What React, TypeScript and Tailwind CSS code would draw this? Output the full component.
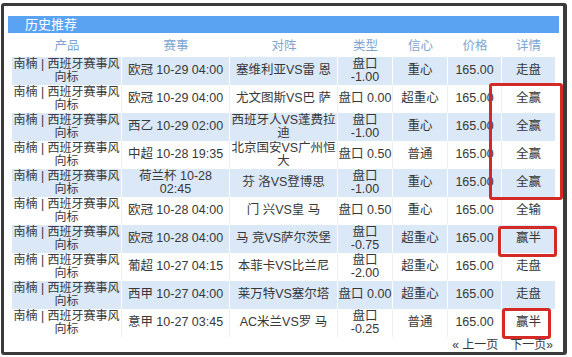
import React from "react";

type Row = {
  match: string[];
  vs: string[];
  type: string[];
  conf: string;
  result: string;
};

const rows: Row[] = [
  { match: ["欧冠 10-29 04:00"], vs: ["塞维利亚VS雷 恩"], type: ["盘口", "-1.00"], conf: "重心", result: "走盘" },
  { match: ["欧冠 10-29 04:00"], vs: ["尤文图斯VS巴 萨"], type: ["盘口 0.00"], conf: "超重心", result: "全赢" },
  { match: ["西乙 10-29 02:00"], vs: ["西班牙人VS蓬费拉", "迪"], type: ["盘口", "-1.00"], conf: "重心", result: "全赢" },
  { match: ["中超 10-28 19:35"], vs: ["北京国安VS广州恒", "大"], type: ["盘口 0.50"], conf: "普通", result: "全赢" },
  { match: ["荷兰杯 10-28", "02:45"], vs: ["芬 洛VS登博思"], type: ["盘口", "-1.00"], conf: "重心", result: "全赢" },
  { match: ["欧冠 10-28 04:00"], vs: ["门 兴VS皇 马"], type: ["盘口 0.50"], conf: "重心", result: "全输" },
  { match: ["欧冠 10-28 04:00"], vs: ["马 竞VS萨尔茨堡"], type: ["盘口", "-0.75"], conf: "超重心", result: "赢半" },
  { match: ["葡超 10-27 04:15"], vs: ["本菲卡VS比兰尼"], type: ["盘口", "-2.00"], conf: "超重心", result: "走盘" },
  { match: ["西甲 10-27 04:00"], vs: ["莱万特VS塞尔塔"], type: ["盘口 0.00"], conf: "超重心", result: "走盘" },
  { match: ["意甲 10-27 03:45"], vs: ["AC米兰VS罗 马"], type: ["盘口", "-0.25"], conf: "普通", result: "赢半" },
];

const widths = ["w-[110px]", "w-[108px]", "w-[108px]", "w-[55px]", "w-[55px]", "w-[54px]", "w-[53px]"];
const headers = ["产品", "赛事", "对阵", "类型", "信心", "价格", "详情"];

function Lines({ lines }: { lines: string[] }) {
  return (
    <span>
      {lines.map((l, i) => (
        <React.Fragment key={i}>
          {i > 0 && <br />}
          {l}
        </React.Fragment>
      ))}
    </span>
  );
}

export default function App() {
  return (
    <div className="relative w-[572px] h-[357px] bg-white pt-[3px] pl-[1px] font-['Liberation_Sans','Noto_Sans_CJK_SC',sans-serif] text-[#383838]">
      <div className="w-[566px] h-[352px] border-[3px] border-r-[4px] border-[#3b3b3b] rounded-[3px] bg-white">
        {/* title bar */}
        <div className="mt-[10px] ml-[4px] w-[551px] h-[17px] bg-[#5aa3f3] pl-[17px] flex items-center text-[13px] text-white leading-none">
          历史推荐
        </div>

        {/* column headers */}
        <div className="ml-[8px] w-[543px] h-[24px] flex pt-[3px] text-[12.5px] text-[#7ea5cf]">
          {headers.map((h, i) => (
            <div key={h} className={`${widths[i]} flex items-center justify-center`}>
              {h}
            </div>
          ))}
        </div>

        {/* rows */}
        <div className="ml-[8px] w-[543px]">
          {rows.map((r, idx) => {
            const blue = idx % 2 === 0;
            const line = blue ? "border-white" : "border-[#eaf0f7]";
            const cells: string[][] = [
              ["南楠 | 西班牙赛事风", "向标"],
              r.match,
              r.vs,
              r.type,
              [r.conf],
              ["165.00"],
              [r.result],
            ];
            return (
              <div
                key={idx}
                className={`flex h-[28px] text-[12.5px] leading-[13.5px] ${blue ? "bg-[#dae8f8]" : "bg-white"}`}
              >
                {cells.map((c, i) => (
                  <div
                    key={i}
                    className={`${widths[i]} flex items-center justify-center text-center whitespace-nowrap ${
                      i === 0 ? "text-[12px]" : ""
                    } ${i < 6 ? `border-r ${line}` : ""}`}
                  >
                    <Lines lines={c} />
                  </div>
                ))}
              </div>
            );
          })}
        </div>

        {/* pagination */}
        <div className="ml-[8px] w-[543px] h-[15px] flex justify-end items-end gap-[12px] pr-[2px] text-[12px] leading-[13px]">
          <span>« 上一页</span>
          <span>下一页»</span>
        </div>
      </div>

      {/* red annotation boxes */}
      <div className="absolute left-[489px] top-[83px] w-[74px] h-[117px] border-[3px] border-[#d42a25] rounded-[3px]" />
      <div className="absolute left-[498px] top-[226px] w-[59px] h-[31px] border-[3px] border-[#d42a25] rounded-[3px]" />
      <div className="absolute left-[502px] top-[308px] w-[49px] h-[31px] border-[3px] border-[#d42a25] rounded-[3px]" />
    </div>
  );
}
